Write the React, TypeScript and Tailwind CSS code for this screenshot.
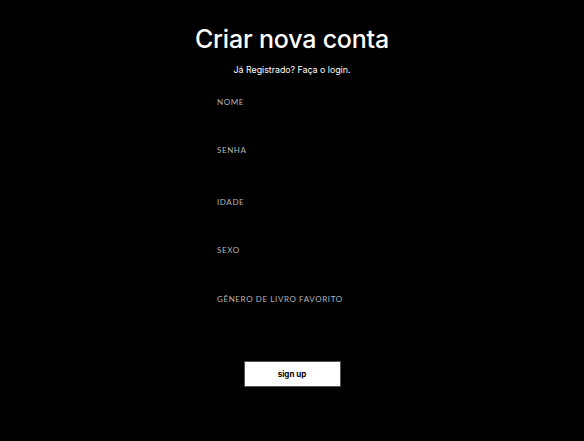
const fields = [
  { label: 'Nome', type: 'text', box: 'h-[48px]' },
  { label: 'Senha', type: 'password', box: 'h-[52px]' },
  { label: 'Idade', type: 'number', box: 'h-[48px]' },
  { label: 'Sexo', type: 'text', box: 'h-[49px]' },
  { label: 'Gênero de livro favorito', type: 'text', box: 'h-[62px]' },
] as const;

export default function App() {
  return (
    <main className="flex min-h-[441px] w-full flex-col items-center bg-black pt-[22px] font-['Inter',sans-serif] text-white">
      <h1 className="text-[25px] font-medium leading-[34px] tracking-[-0.2px]">Criar nova conta</h1>
      <p className="mt-[7px] text-[8.8px] leading-[14px] text-white">
        Já Registrado? <a href="#login">Faça o login.</a>
      </p>

      <form className="mt-[19px] flex w-[150px] flex-col" onSubmit={(e) => e.preventDefault()}>
        {fields.map((field) => (
          <label key={field.label} className={`flex flex-col ${field.box}`}>
            <span className="font-['Lato',sans-serif] text-[8px] uppercase leading-[12px] tracking-[0.6px] text-[#b5b5b5]">
              {field.label}
            </span>
            <input
              type={field.type}
              className="mt-1 h-6 w-full border-0 bg-transparent text-xs text-white outline-none"
            />
          </label>
        ))}
        <button
          type="submit"
          className="mx-auto mt-[6px] flex h-[26px] w-[97px] items-center justify-center border border-[#555] bg-white text-[8px] font-bold text-black"
        >
          sign up
        </button>
      </form>
    </main>
  );
}
